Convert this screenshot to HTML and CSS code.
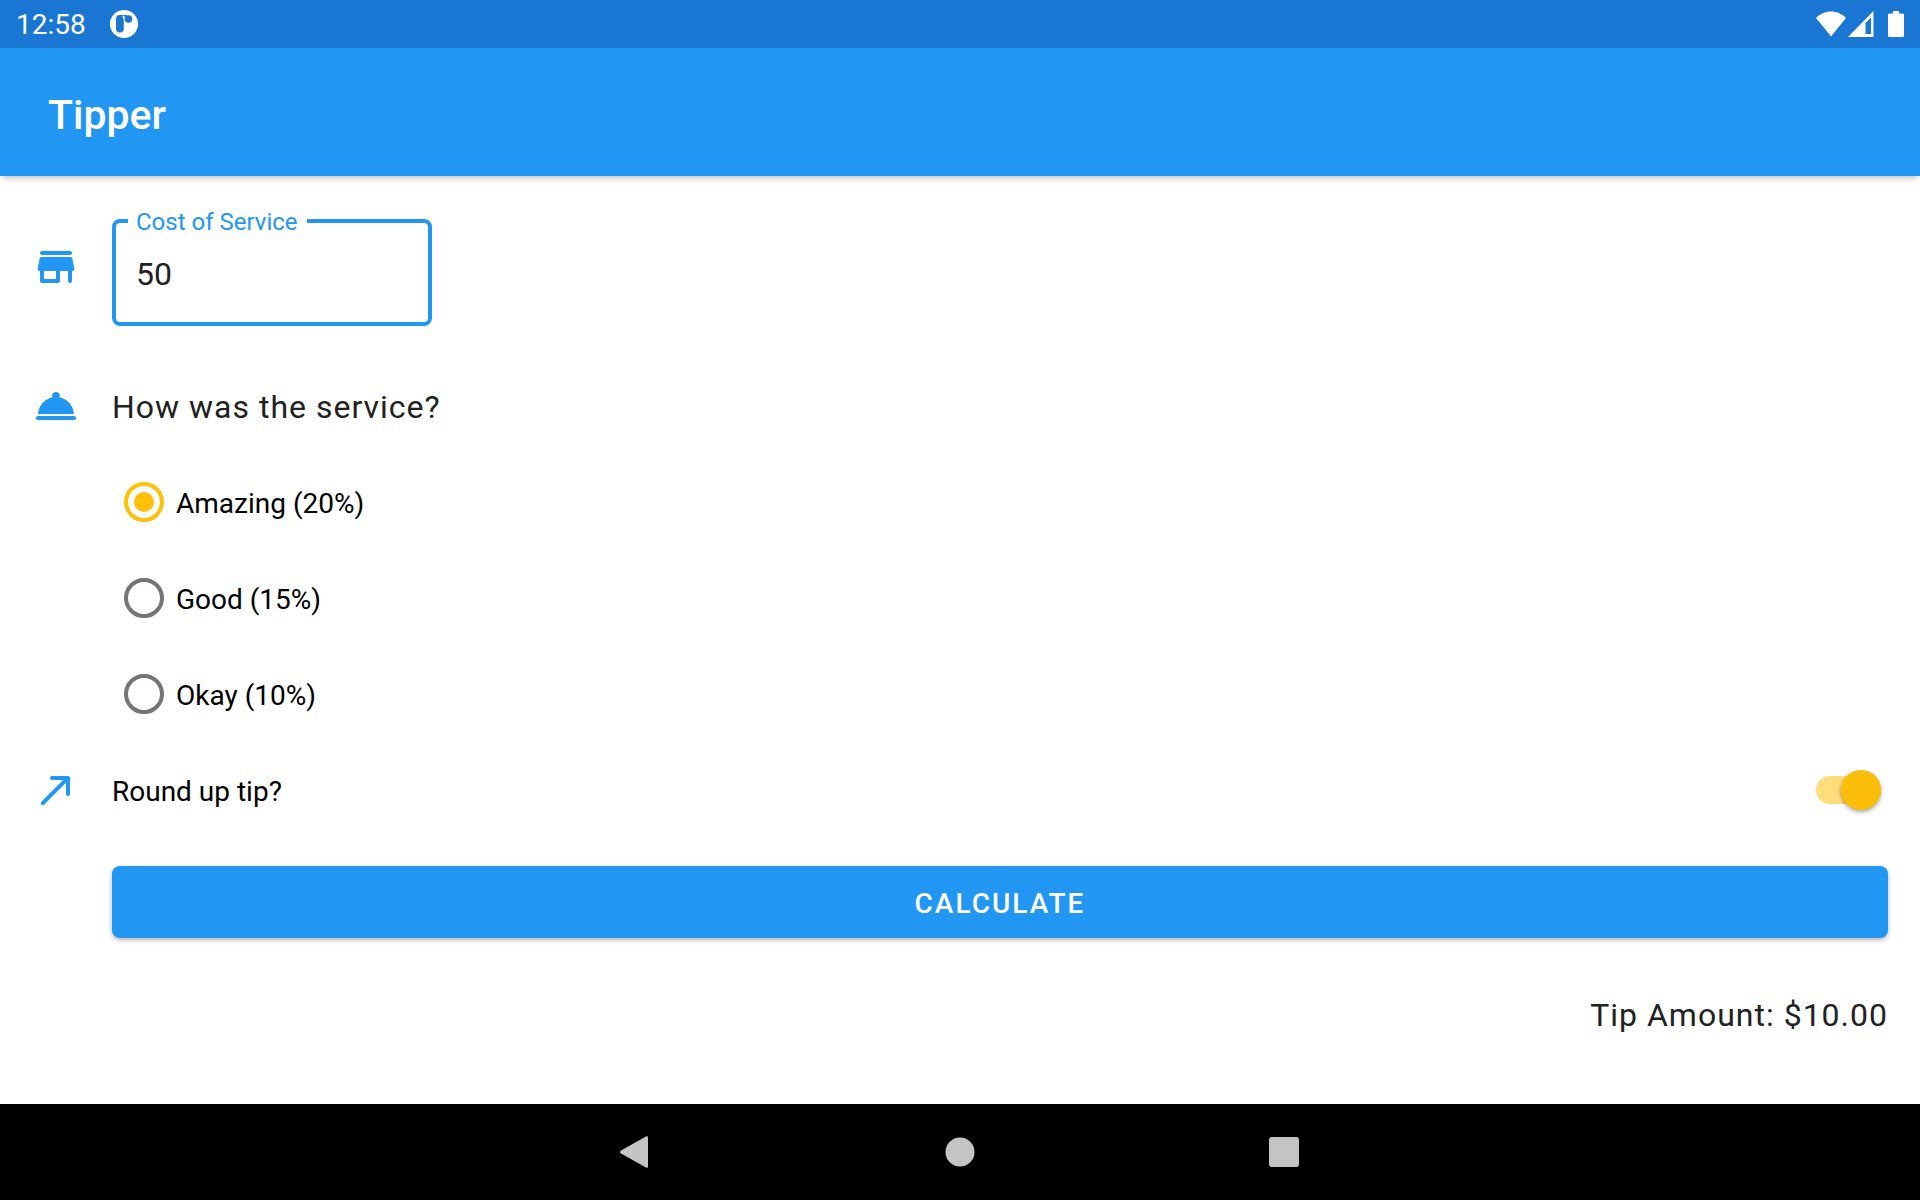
FILE: index.html
```html
<!DOCTYPE html>
<html lang="en">
<head>
  <meta charset="utf-8">
  <title>Tipper</title>
  <meta name="viewport" content="width=device-width, initial-scale=1">
  <link rel="stylesheet" href="styles.css">
</head>
<body>
  <div class="status-bar">
    <time class="clock">12:58</time>
    <svg class="notification" width="28" height="28" viewBox="0 0 28 28" aria-hidden="true">
      <circle cx="14" cy="14" r="14" fill="#fff"/>
      <path d="M10 5h7.500l-2.500 2-1.200 4v8.500a4 4 0 0 1-7.800 0V9a4 4 0 0 1 4-4z" fill="#1976d2"/>
      <path d="M13.500 5.300q1.600 1.300 1.200 3.700l-.9 1.500-1.300-4z" fill="#fff"/>
      <circle cx="18.500" cy="9" r="3.800" fill="#1976d2"/>
    </svg>
    <svg class="wifi" width="30" height="26" viewBox="0 0 30 26" aria-hidden="true">
      <path d="M15 25.500 0 7C4 3 9 .5 15 .5S26 3 30 7z" fill="#fff"/>
    </svg>
    <svg class="signal" width="26" height="26" viewBox="0 0 26 26" aria-hidden="true">
      <path d="M0 26 25.500 0v26zM17.500 23H23V6.500L17.500 12z" fill="#fff" fill-rule="evenodd"/>
    </svg>
    <svg class="battery" width="16" height="26" viewBox="0 0 16 26" aria-hidden="true">
      <path d="M5 0h6v2.500h3.500A1.500 1.500 0 0 1 16 4v20.500a1.500 1.500 0 0 1-1.500 1.500h-13A1.500 1.500 0 0 1 0 24.500V4a1.500 1.500 0 0 1 1.500-1.500H5z" fill="#fff"/>
    </svg>
  </div>

  <header class="app-bar">
    <h1 class="app-title">Tipper</h1>
  </header>

  <main class="content">
    <form class="form">
      <div class="row cost-row">
        <svg class="icon" viewBox="0 0 24 24" aria-hidden="true"><path d="M5 6h14c.55 0 1-.45 1-1s-.45-1-1-1H5c-.55 0-1 .45-1 1s.45 1 1 1zm15.160 1.800c-.09-.46-.5-.8-.98-.8H4.820c-.48 0-.89.34-.98.8l-1 5c-.12.62.35 1.200.98 1.200H4v5c0 .55.45 1 1 1h8c.55 0 1-.45 1-1v-5h4v5c0 .55.45 1 1 1s1-.45 1-1v-5h.18c.63 0 1.100-.58.98-1.200l-1-5zM12 18H6v-4h6v4z"/></svg>
        <div class="text-field">
          <label class="field-label" for="cost">Cost of Service</label>
          <input class="field-input" id="cost" type="text" inputmode="decimal" value="50">
        </div>
      </div>

      <div class="row">
        <svg class="icon" viewBox="0 0 24 24" aria-hidden="true"><path d="M21 17H3c-.55 0-1 .45-1 1s.45 1 1 1h18c.55 0 1-.45 1-1s-.45-1-1-1zm-7.160-9.210c.1-.24.16-.51.16-.79 0-1.100-.9-2-2-2s-2 .9-2 2c0 .28.06.55.16.79C6.250 8.600 3.270 11.930 3 16h18c-.27-4.070-3.250-7.400-7.160-8.210z"/></svg>
        <p class="body-text" id="question">How was the service?</p>
      </div>

      <div class="options" role="radiogroup" aria-labelledby="question">
        <label class="option"><input class="radio" type="radio" name="tip" checked><span class="label-text">Amazing (20%)</span></label>
        <label class="option"><input class="radio" type="radio" name="tip"><span class="label-text">Good (15%)</span></label>
        <label class="option"><input class="radio" type="radio" name="tip"><span class="label-text">Okay (10%)</span></label>
      </div>

      <div class="row">
        <svg class="icon" viewBox="0 0 24 24" aria-hidden="true"><path d="M9 6c0 .56.450 1 1 1h5.590L4.700 17.890c-.39.39-.39 1.020 0 1.410.39.39 1.020.39 1.410 0L17 8.410V14c0 .55.450 1 1 1s1-.45 1-1V6c0-.55-.45-1-1-1h-8c-.55 0-1 .450-1 1z"/></svg>
        <label class="label-text" for="round-up">Round up tip?</label>
        <input class="switch" id="round-up" type="checkbox" role="switch" checked>
      </div>

      <button class="calculate" type="button">CALCULATE</button>
      <output class="body-text result">Tip Amount: $10.00</output>
    </form>
  </main>

  <nav class="nav-bar">
    <button class="nav-button" type="button" aria-label="Back">
      <svg width="32" height="32" viewBox="0 0 32 32"><path d="M1 14.500 26 .5q2-1 2 1v29q0 2-2 1L1 17.500q-2-1.500 0-3z" fill="#c4c4c4"/></svg>
    </button>
    <button class="nav-button" type="button" aria-label="Home">
      <svg width="30" height="30" viewBox="0 0 30 30"><circle cx="15" cy="15" r="14.500" fill="#c4c4c4"/></svg>
    </button>
    <button class="nav-button" type="button" aria-label="Overview">
      <svg width="30" height="30" viewBox="0 0 30 30"><rect width="30" height="30" rx="3" fill="#c4c4c4"/></svg>
    </button>
  </nav>
</body>
</html>
```

FILE: styles.css
```css
:root {
  --primary: #2196f3;
  --primary-dark: #1976d2;
  --accent: #ffc107;
  --ink: #212121;
}

* {
  box-sizing: border-box;
}

body {
  margin: 0;
  min-height: 100vh;
  display: flex;
  flex-direction: column;
  background: #fff;
  color: #000;
  font-family: Roboto, "Noto Sans", sans-serif;
  font-size: 28px;
  line-height: 32px;
}

.status-bar {
  display: flex;
  align-items: center;
  height: 48px;
  padding: 0 16px;
  background: var(--primary-dark);
  color: #fff;
}

.clock {
  margin-right: 24px;
  padding-top: 2px;
}

.wifi {
  margin-left: auto;
}

.signal {
  margin: 0 14px 0 2px;
}

.app-bar {
  display: flex;
  align-items: center;
  height: 128px;
  padding: 6px 48px 0;
  background: var(--primary);
  color: #fff;
  box-shadow: 0 4px 6px -2px rgba(0, 0, 0, 0.25);
}

.app-title {
  margin: 0;
  font-size: 41px;
  font-weight: 500;
  line-height: 48px;
}

.content {
  flex: 1;
  padding: 32px 32px 64px;
}

.form {
  display: flex;
  flex-direction: column;
}

.row {
  display: flex;
  align-items: center;
  height: 96px;
}

.cost-row {
  height: 118px;
  margin-bottom: 32px;
}

.icon {
  flex: none;
  width: 48px;
  height: 48px;
  margin-right: 32px;
  fill: var(--primary);
}

.text-field {
  position: relative;
  width: 320px;
  padding-top: 11px;
}

.field-label {
  position: absolute;
  top: 0;
  left: 16px;
  padding: 0 9px 0 8px;
  background: #fff;
  color: var(--primary);
  font-size: 24px;
  line-height: 28px;
}

.field-input {
  display: block;
  width: 100%;
  height: 107px;
  padding: 2px 20px 0;
  border: 4px solid var(--primary);
  border-radius: 8px;
  outline: 0;
  background: #fff;
  color: var(--ink);
  font: 32px Roboto, "Noto Sans", sans-serif;
}

.body-text {
  margin: 0;
  padding-top: 2px;
  color: var(--ink);
  font-size: 32px;
  line-height: 40px;
  letter-spacing: 1px;
}

.label-text {
  padding-top: 3px;
}

.options {
  display: flex;
  flex-direction: column;
  align-items: flex-start;
  padding-left: 92px;
}

.option {
  display: flex;
  align-items: center;
  gap: 12px;
  height: 96px;
}

.radio {
  appearance: none;
  width: 40px;
  height: 40px;
  margin: 0;
  border: 4px solid #757575;
  border-radius: 50%;
}

.radio:checked {
  padding: 6px;
  border-color: var(--accent);
  background: var(--accent) content-box;
}

.switch {
  appearance: none;
  display: flex;
  align-items: center;
  justify-content: flex-end;
  width: 65px;
  height: 28px;
  margin: 0 7px 0 auto;
  border-radius: 14px;
  background: #ffdd7b;
}

.switch::before {
  content: "";
  flex: none;
  width: 40px;
  height: 40px;
  border-radius: 50%;
  background: #fabd08;
  box-shadow: 0 2px 4px rgba(0, 0, 0, 0.35);
}

.switch:not(:checked) {
  justify-content: flex-start;
}

.calculate {
  height: 72px;
  margin: 28px 0 0 80px;
  padding: 2px 0 0;
  border: 0;
  border-radius: 8px;
  background: var(--primary);
  box-shadow: 0 2px 5px rgba(0, 0, 0, 0.3);
  color: #fff;
  font: 500 28px Roboto, "Noto Sans", sans-serif;
  letter-spacing: 2px;
}

.result {
  margin-top: 55px;
  text-align: right;
}

.nav-bar {
  display: flex;
  align-items: center;
  justify-content: center;
  gap: 164px;
  height: 96px;
  background: #000;
}

.nav-button {
  display: flex;
  align-items: center;
  justify-content: center;
  width: 160px;
  height: 96px;
  padding: 0;
  border: 0;
  background: none;
}
```
